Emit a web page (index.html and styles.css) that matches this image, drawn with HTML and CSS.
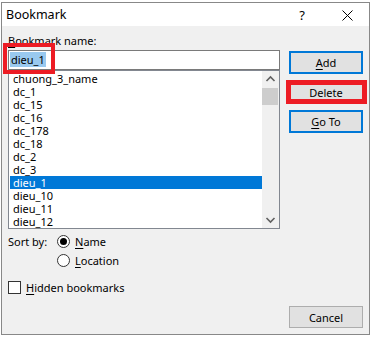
FILE: index.html
```html
<!DOCTYPE html>
<html>
<head>
<meta charset="utf-8">
<link rel="stylesheet" href="styles.css">
</head>
<body>
<div class="dialog">
  <div class="titlebar">
    <span class="title">Bookmark</span>
    <span class="help">?</span>
    <svg class="close" width="11" height="11" viewBox="0 0 11 11"><path d="M0.5 0.5 L10.5 10.5 M10.5 0.5 L0.5 10.5" stroke="#000" stroke-width="1" fill="none"/></svg>
  </div>
  <div class="content">
    <div class="main">
      <div class="left">
        <div class="lbl"><u>B</u>ookmark name:</div>
        <div class="input"><span class="sel">dieu_1</span></div>
        <div class="list">
          <div class="items">
            <div class="item">chuong_3_name</div>
            <div class="item">dc_1</div>
            <div class="item">dc_15</div>
            <div class="item">dc_16</div>
            <div class="item">dc_178</div>
            <div class="item">dc_18</div>
            <div class="item">dc_2</div>
            <div class="item">dc_3</div>
            <div class="item selected">dieu_1</div>
            <div class="item">dieu_10</div>
            <div class="item">dieu_11</div>
            <div class="item">dieu_12</div>
          </div>
          <div class="scroll">
            <svg class="arrow" width="17" height="17" viewBox="0 0 17 17"><path d="M4.5 10 L8.5 6 L12.5 10" stroke="#606060" stroke-width="1.6" fill="none"/></svg>
            <div class="thumb"></div>
            <div class="track"></div>
            <svg class="arrow" width="17" height="17" viewBox="0 0 17 17"><path d="M4.5 7 L8.5 11 L12.5 7" stroke="#606060" stroke-width="1.6" fill="none"/></svg>
          </div>
        </div>
      </div>
      <div class="right">
        <div class="btn default add"><u>A</u>dd</div>
        <div class="btn del"><u>D</u>elete</div>
        <div class="btn default"><u>G</u>o To</div>
      </div>
    </div>
    <div class="row sortrow">
      <span class="sortlbl">Sort by:</span>
      <span class="radio checked"></span>
      <span><u>N</u>ame</span>
    </div>
    <div class="row locrow">
      <span class="radio"></span>
      <span><u>L</u>ocation</span>
    </div>
    <div class="row hiddenrow">
      <span class="check"></span>
      <span><u>H</u>idden bookmarks</span>
    </div>
    <div class="footer">
      <div class="btn cancel">Cancel</div>
    </div>
  </div>
  <div class="mark mark-name"></div>
  <div class="mark mark-delete"></div>
</div>
</body>
</html>
```

FILE: styles.css
```css
html, body {
  margin: 0;
  padding: 0;
  background: #ffffff;
}
body {
  font-family: "Noto Sans", sans-serif;
  font-size: 11px;
  color: #000;
}
u { text-decoration: underline; text-underline-offset: 2px; }

.dialog {
  position: relative;
  margin: 2px 0 0 1px;
  width: 369px;
  height: 333px;
  box-sizing: border-box;
  border: 1px solid #888888;
  background: #f0f0f0;
  display: flex;
  flex-direction: column;
}

.titlebar {
  height: 23px;
  background: #ffffff;
  display: flex;
  align-items: center;
  flex: none;
}
.title {
  margin-left: 4px;
  font-size: 12.5px;
  line-height: 18px;
}
.help {
  margin-left: auto;
  font-size: 13px;
  line-height: 18px;
}
.close {
  margin-left: 37px;
  margin-right: 16px;
  margin-top: 1px;
}

.content {
  padding: 7px 6px 0 6px;
  display: flex;
  flex-direction: column;
}

.main {
  display: flex;
  gap: 9px;
}
.left {
  width: 272px;
  display: flex;
  flex-direction: column;
}
.lbl {
  line-height: 15px;
  height: 15px;
  margin-bottom: 2px;
}
.input {
  height: 20px;
  box-sizing: border-box;
  border: 1px solid #7a7a7a;
  background: #fff;
  padding-left: 1px;
}
.sel {
  display: inline-block;
  margin-top: 1px;
  height: 15px;
  line-height: 15px;
  padding: 0 1px;
  background: #99c9ef;
}

.list {
  height: 159px;
  box-sizing: border-box;
  border: 1px solid #828790;
  background: #fff;
  display: flex;
}
.items {
  flex: 1;
  padding: 1px 0 0 1px;
  overflow: hidden;
}
.item {
  height: 13px;
  line-height: 13px;
  padding-left: 3px;
  white-space: nowrap;
}
.item.selected {
  background: #0078d7;
  color: #fff;
}
.scroll {
  width: 17px;
  background: #f0f0f0;
  display: flex;
  flex-direction: column;
}
.arrow { display: block; flex: none; }
.thumb {
  height: 17px;
  margin: 0 1px 0 0;
  background: #cdcdcd;
  flex: none;
}
.track { flex: 1; }

.right {
  width: 74px;
  display: flex;
  flex-direction: column;
  padding-top: 18px;
}
.btn {
  height: 23px;
  box-sizing: border-box;
  border: 1px solid #adadad;
  background: #e1e1e1;
  display: flex;
  align-items: center;
  justify-content: center;
  line-height: 15px;
}
.btn.default {
  border: 2px solid #0078d7;
}
.add { margin-bottom: 7px; }
.del { margin-bottom: 6px; }

.row {
  height: 19px;
  display: flex;
  align-items: center;
  line-height: 15px;
}
.sortrow { margin-top: 3px; }
.sortlbl { width: 49px; }
.locrow { padding-left: 49px; }
.radio {
  width: 13px;
  height: 13px;
  box-sizing: border-box;
  border: 1px solid #333;
  border-radius: 50%;
  background: #fff;
  margin-right: 5px;
  display: flex;
  align-items: center;
  justify-content: center;
}
.radio.checked::after {
  content: "";
  width: 7px;
  height: 7px;
  border-radius: 50%;
  background: #000;
}
.hiddenrow { margin-top: 8px; }
.check {
  width: 13px;
  height: 13px;
  box-sizing: border-box;
  border: 1px solid #333;
  background: #fff;
  margin-right: 5px;
}

.footer {
  margin-top: 9px;
  display: flex;
  justify-content: flex-end;
}
.cancel {
  width: 74px;
  height: 22px;
}

.mark {
  position: absolute;
  box-sizing: border-box;
  border: 4px solid #ed1c24;
}
.mark-name {
  left: 1px;
  top: 40px;
  width: 52px;
  height: 31px;
}
.mark-delete {
  border-width: 5px;
  left: 284px;
  top: 77px;
  width: 81px;
  height: 24px;
}
```
